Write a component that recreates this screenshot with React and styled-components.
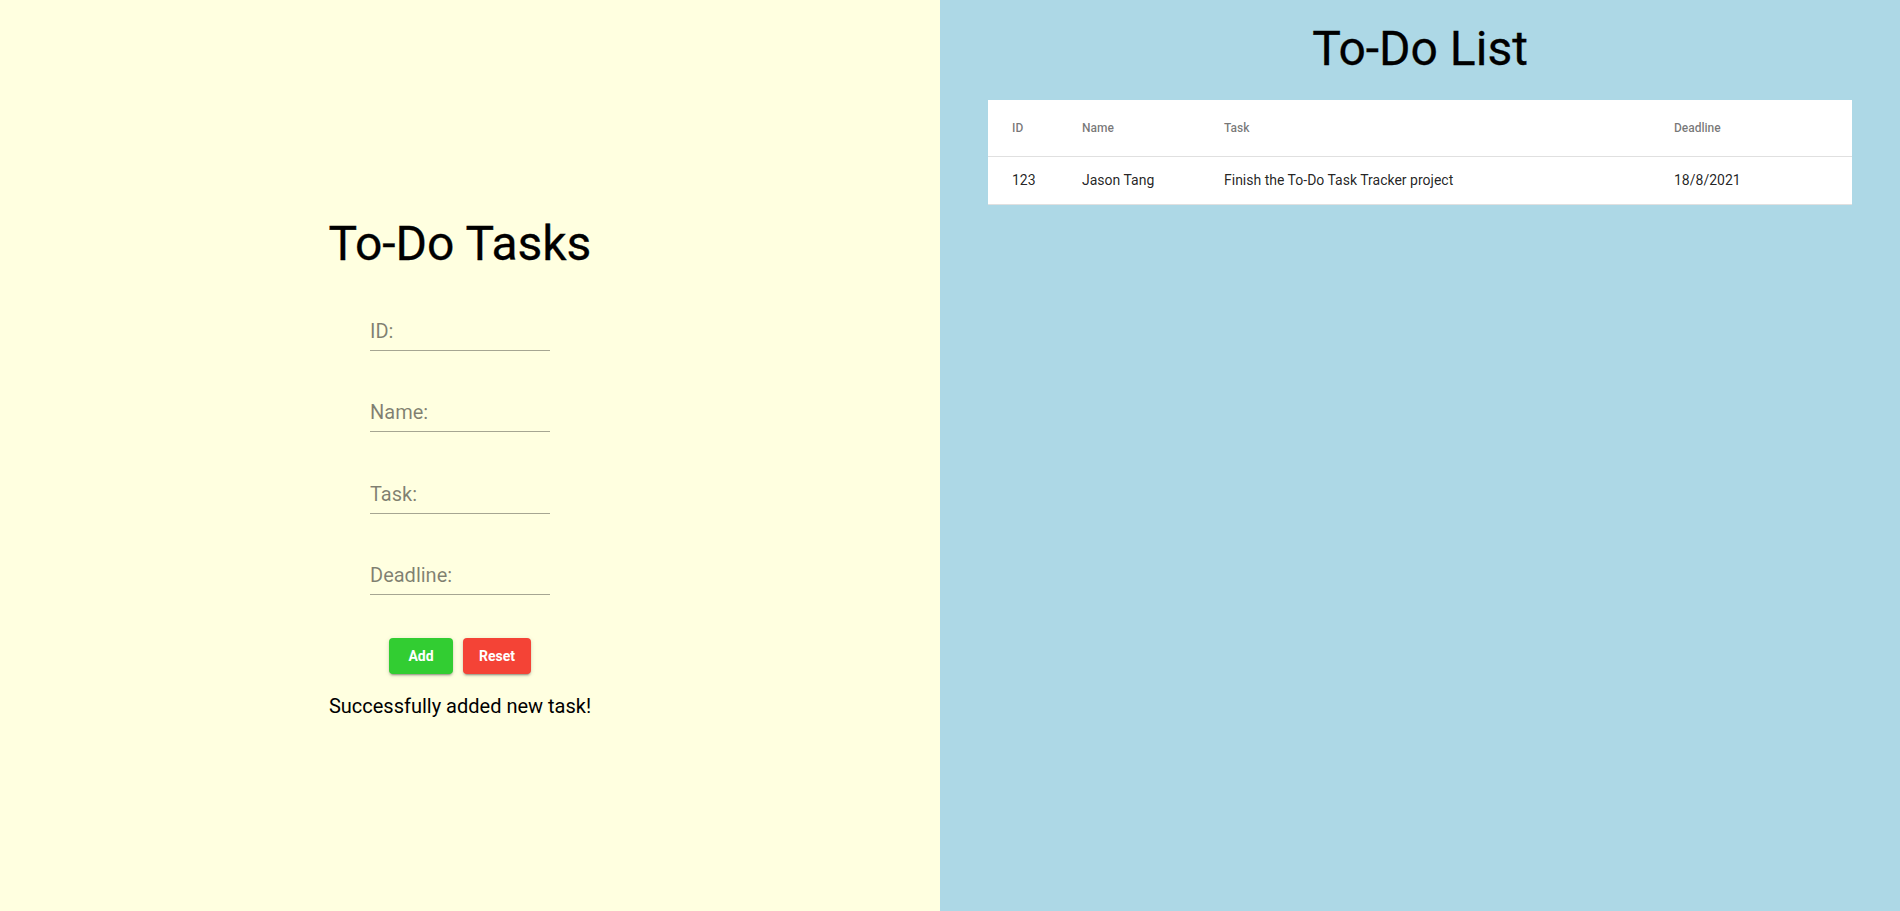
import styled, { createGlobalStyle } from 'styled-components'

const GlobalStyle = createGlobalStyle`
  html, body {
    margin: 0;
    padding: 0;
    height: 100%;
  }
  body {
    font-family: Roboto, "Liberation Sans", Arial, sans-serif;
  }
  #root {
    height: 100%;
  }
`

const Page = styled.div`
  display: grid;
  grid-template-columns: 940px 1fr;
  height: 911px;
`

const FormPanel = styled.section`
  background: #ffffe0;
  display: flex;
  flex-direction: column;
  align-items: center;
  padding: 215px 20px 0 0;
`

const ListPanel = styled.section`
  background: #add8e6;
  display: flex;
  flex-direction: column;
  align-items: center;
  padding-top: 20px;
`

const Heading = styled.h1`
  margin: 0;
  font-size: 48px;
  font-weight: 400;
  line-height: 57px;
  color: #000;
  -webkit-text-stroke: 0.3px #000;
`

const Form = styled.form`
  display: flex;
  flex-direction: column;
  align-items: center;
  margin-top: 41px;
`

const Fields = styled.div`
  display: flex;
  flex-direction: column;
  gap: 43.3px;
`

const Input = styled.input`
  box-sizing: border-box;
  width: 180px;
  padding: 6px 0 7px;
  border: none;
  border-bottom: 1px solid rgba(0, 0, 0, 0.35);
  background: transparent;
  font-family: Roboto, "Liberation Sans", Arial, sans-serif;
  font-size: 20px;
  line-height: 24px;
  color: rgba(0, 0, 0, 0.87);
  outline: none;

  &::placeholder {
    color: rgba(0, 0, 0, 0.5);
    opacity: 1;
  }
`

const Buttons = styled.div`
  display: flex;
  gap: 10px;
  margin-top: 43px;
`

const Button = styled.button`
  min-width: 64px;
  height: 36px;
  padding: 0 16px;
  border: none;
  border-radius: 4px;
  background: ${props => props.bg};
  color: #fff;
  font-family: Roboto, "Liberation Sans", Arial, sans-serif;
  font-size: 14px;
  font-weight: 700;
  cursor: pointer;
  box-shadow: 0 3px 1px -2px rgba(0, 0, 0, 0.2), 0 2px 2px 0 rgba(0, 0, 0, 0.14),
    0 1px 5px 0 rgba(0, 0, 0, 0.12);
`

const Message = styled.p`
  margin: 20px 0 0;
  font-size: 20px;
  line-height: 24px;
  color: #000;
`

const TableCard = styled.div`
  width: 90%;
  margin-top: 23px;
  background: #fff;
`

const Table = styled.table`
  width: 100%;
  border-collapse: collapse;
  table-layout: fixed;
`

const HeadRow = styled.tr`
  height: 56px;
`

const BodyRow = styled.tr`
  height: 48px;
`

const Cell = styled.td`
  box-sizing: border-box;
  width: ${props => props.w};
  padding: 4px 24px;
  border-bottom: 1px solid rgba(224, 224, 224, 1);
  text-align: left;
  vertical-align: middle;
  font-size: 14px;
  font-weight: 400;
  color: rgba(0, 0, 0, 0.87);
`

const HeadCell = styled(Cell).attrs({ as: 'th' })`
  font-size: 12px;
  font-weight: 500;
  color: rgba(0, 0, 0, 0.54);
`

const columns = [
  { key: 'id', label: 'ID', w: '70px' },
  { key: 'name', label: 'Name', w: '142px' },
  { key: 'task', label: 'Task', w: '450px' },
  { key: 'deadline', label: 'Deadline', w: 'auto' },
]

const tasks = [
  { id: '123', name: 'Jason Tang', task: 'Finish the To-Do Task Tracker project', deadline: '18/8/2021' },
]

export default function App() {
  return (
    <>
      <GlobalStyle />
      <Page>
        <FormPanel>
          <Heading>To-Do Tasks</Heading>
          <Form onSubmit={e => e.preventDefault()}>
            <Fields>
              <Input placeholder="ID:" />
              <Input placeholder="Name:" />
              <Input placeholder="Task:" />
              <Input placeholder="Deadline:" />
            </Fields>
            <Buttons>
              <Button type="submit" bg="#32cd32">Add</Button>
              <Button type="reset" bg="#f44336">Reset</Button>
            </Buttons>
          </Form>
          <Message>Successfully added new task!</Message>
        </FormPanel>
        <ListPanel>
          <Heading>To-Do List</Heading>
          <TableCard>
            <Table>
              <thead>
                <HeadRow>
                  {columns.map(c => (
                    <HeadCell key={c.key} w={c.w}>{c.label}</HeadCell>
                  ))}
                </HeadRow>
              </thead>
              <tbody>
                {tasks.map(t => (
                  <BodyRow key={t.id}>
                    {columns.map(c => (
                      <Cell key={c.key}>{t[c.key]}</Cell>
                    ))}
                  </BodyRow>
                ))}
              </tbody>
            </Table>
          </TableCard>
        </ListPanel>
      </Page>
    </>
  )
}
